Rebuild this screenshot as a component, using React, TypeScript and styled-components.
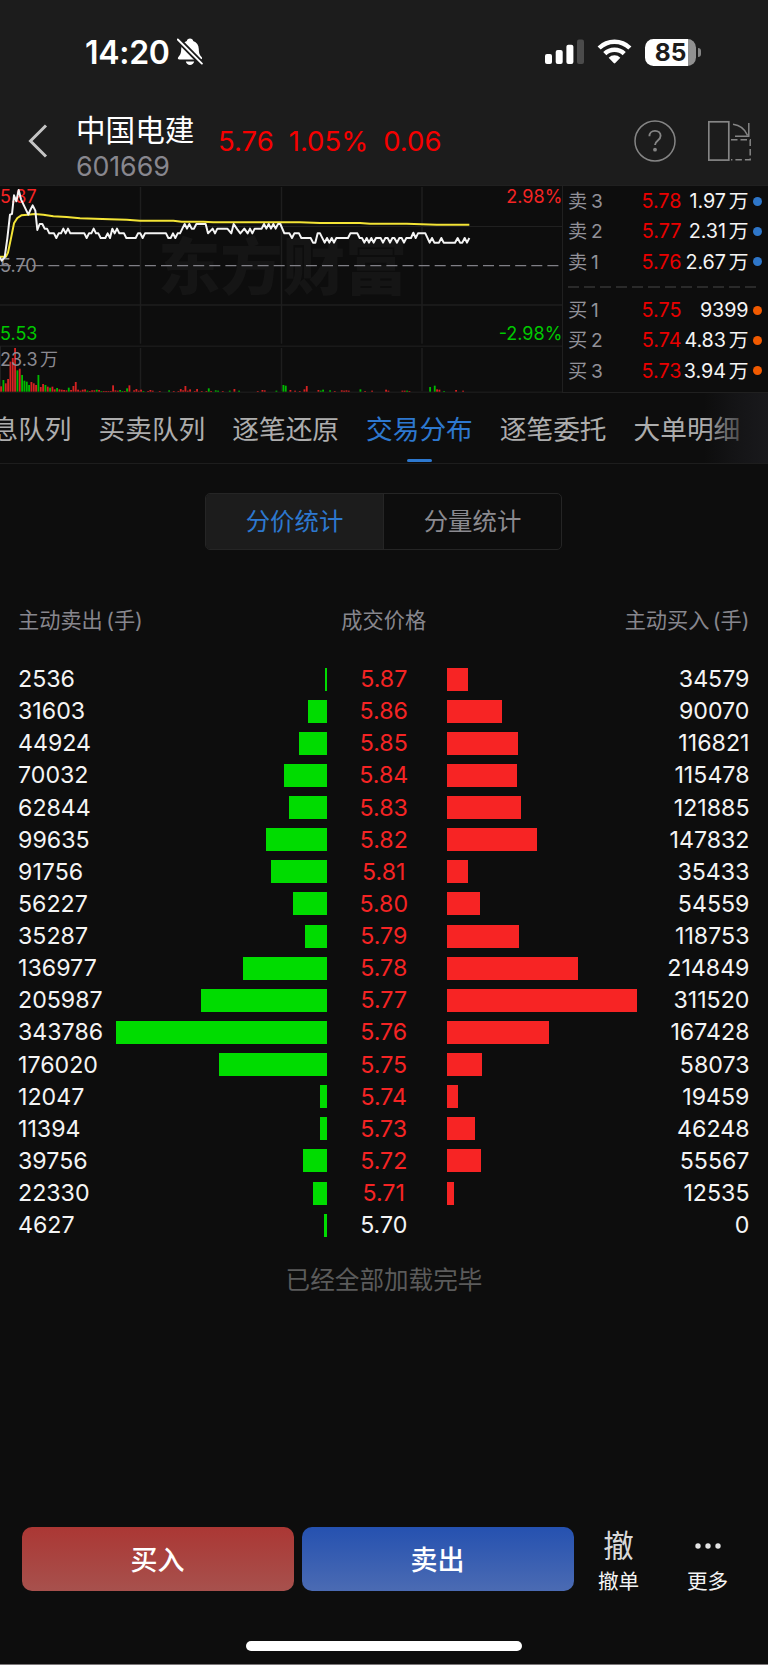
import React from "react";
import styled, { createGlobalStyle, css } from "styled-components";

const GlobalStyle = createGlobalStyle`
  * { box-sizing: border-box; }
  body {
    margin: 0;
    background: #0d0d0d;
    color: #f4f4f4;
    font-family: Inter, "Noto Sans CJK SC", sans-serif;
  }
`;

const Screen = styled.div`
  width: 768px;
  height: 1665px;
  display: flex;
  flex-direction: column;
  overflow: hidden;
  background: #0d0d0d;
  border-bottom: 1px solid #7b7779;
`;

/* ---------- status bar ---------- */

const StatusBar = styled.div`
  height: 104px;
  flex: none;
  display: flex;
  align-items: center;
  padding: 0 67px 0 85px;
  background: #1c1c1c;
`;

const Clock = styled.div`
  font-size: 32px;
  font-weight: 600;
  line-height: 40px;
  letter-spacing: -0.3px;
  color: #fff;
  width: 92px;
  padding-top: 1px;
  white-space: nowrap;
`;

const StatusIcons = styled.div`
  margin-left: auto;
  display: flex;
  align-items: center;
`;

const Battery = styled.div`
  width: 51px;
  height: 27px;
  margin-left: 13px;
  border-radius: 8.5px;
  background: linear-gradient(90deg, #fff 43px, #919191 43px);
  color: #1c1c1c;
  font-size: 24.5px;
  font-weight: 700;
  line-height: 27px;
  text-align: center;
`;

const BatteryTip = styled.div`
  width: 3px;
  height: 9px;
  margin-left: 2px;
  border-radius: 0 4px 4px 0;
  background: #858585;
`;

/* ---------- stock header ---------- */

const Header = styled.header`
  height: 81px;
  flex: none;
  display: flex;
  padding: 7px 17px 0 28px;
  background: #1c1c1c;
`;

const BackIcon = styled.svg`
  margin-top: 13px;
  flex: none;
`;

const StockTitle = styled.div`
  width: 142px;
  margin-left: 28px;
`;

const StockName = styled.div`
  height: 39px;
  font-size: 29.6px;
  line-height: 38px;
  color: #fff;
  white-space: nowrap;
`;

const StockCode = styled.div`
  height: 34px;
  font-size: 26.8px;
  line-height: 33px;
  letter-spacing: -0.1px;
  color: #88878e;
`;

const Quote = styled.div`
  height: 61px;
  display: flex;
  gap: 15px;
  font-size: 27.5px;
  line-height: 61px;
  color: #f60000;
`;

const HeaderActions = styled.div`
  margin-left: auto;
  display: flex;
  gap: 32px;
  padding-top: 9px;
`;

/* ---------- market strip ---------- */

const Market = styled.section`
  height: 208px;
  flex: none;
  display: flex;
`;

const Book = styled.div`
  flex: 1;
  padding: 1px 7px 0 5px;
  border: solid #202020;
  border-width: 1px 0 1px 1px;
`;

const BookRow = styled.div`
  height: 30.3px;
  display: grid;
  grid-template-columns: 50px 63.5px 67px 9px;
  column-gap: 0;
  align-items: center;
  font-size: 19.8px;
  line-height: 29px;
  white-space: nowrap;
`;

const BookLabel = styled.span`
  font-size: 19.2px;
  word-spacing: -1.5px;
  color: #929198;
  height: 30px;
`;

const BookPrice = styled.span`
  text-align: right;
  color: #e80000;
  height: 30px;
`;

const BookVolume = styled.span`
  text-align: right;
  letter-spacing: -0.1px;
  word-spacing: -2.5px;
  height: 30px;
`;

const Dot = styled.span<{ $side: "sell" | "buy" }>`
  width: 9px;
  height: 9px;
  margin: 0 0 2px 4px;
  border-radius: 50%;
  background: ${(p) => (p.$side === "sell" ? "#2e76c9" : "#f15a00")};
`;

const BookDivider = styled.div`
  height: 2px;
  margin: 8px 5px 8px 0;
  background: repeating-linear-gradient(90deg, #2a2a2a 0 11px, transparent 11px 16.1px);
`;

/* ---------- tabs ---------- */

const Tabs = styled.nav`
  position: relative;
  height: 71px;
  flex: none;
  display: flex;
  gap: 27px;
  padding-left: 98.5px;
  border-bottom: 1px solid #1d1d1d;
  overflow: hidden;

  &::after {
    content: "";
    position: absolute;
    top: 0;
    right: 0;
    width: 64px;
    height: 70px;
    background: linear-gradient(90deg, rgba(24, 24, 27, 0), rgba(25, 25, 28, 0.6) 50%, #19191c);
  }
`;

const Tab = styled.div<{ $active?: boolean; $clipped?: boolean }>`
  flex: none;
  display: flex;
  flex-direction: column;
  align-items: center;
  justify-content: space-between;
  height: 69px;
  font-size: 26.7px;
  line-height: 73px;
  color: ${(p) => (p.$active ? "#2d78cf" : "#adadad")};
  ${(p) => p.$clipped && css`margin-left: -107px;`}

  span { height: 66px; }
`;

const Underline = styled.i`
  width: 25px;
  height: 3px;
  border-radius: 2px;
  background: #2d78cf;
`;

/* ---------- distribution ---------- */

const Segments = styled.div`
  width: 357px;
  height: 57px;
  flex: none;
  margin: 29px auto 0 205px;
  display: flex;
  border: 1px solid #252525;
  border-radius: 5px;
  overflow: hidden;
`;

const Segment = styled.div<{ $active?: boolean }>`
  flex: 1;
  height: 55px;
  line-height: 55px;
  text-align: center;
  font-size: 24.4px;
  color: ${(p) => (p.$active ? "#2d78cf" : "#8b8a90")};
  background: ${(p) => (p.$active ? "#1c1c1c" : "transparent")};
  & + & { border-left: 1px solid #252525; }
`;

const Columns = styled.div`
  display: grid;
  grid-template-columns: 1fr 1fr 1fr;
  height: 32px;
  flex: none;
  margin: 54px 18.5px 0 18px;
  font-size: 21.2px;
  line-height: 32px;
  color: #87868d;
  word-spacing: -2.5px;

  span:nth-child(2) { text-align: center; }
  span:nth-child(3) { text-align: right; }
`;

const Rows = styled.div`
  padding: 0 18.5px 0 18px;
  margin-top: 27px;
  flex: none;
`;

const Row = styled.div`
  height: 32.14px;
  display: grid;
  grid-template-columns: 92px 217px 119.5px 191px 1fr;
  align-items: center;
  font-size: 23.2px;
  line-height: 32px;
`;

const SellCount = styled.span`
  white-space: nowrap;
`;

const BuyCount = styled.span`
  text-align: right;
`;

const Price = styled.span<{ $flat: boolean }>`
  text-align: center;
  padding-right: 6px;
  color: ${(p) => (p.$flat ? "#f4f4f4" : "#f52424")};
`;

const Bar = styled.i<{ $side: "sell" | "buy" }>`
  height: 23px;
  justify-self: ${(p) => (p.$side === "sell" ? "end" : "start")};
  background: ${(p) => (p.$side === "sell" ? "#00dc00" : "#f72424")};
`;

const EndNote = styled.div`
  margin-top: 21px;
  height: 36px;
  line-height: 36px;
  text-align: center;
  font-size: 24.6px;
  color: #5b5b5b;
`;

/* ---------- bottom bar ---------- */

const Footer = styled.footer`
  margin-top: auto;
  height: 137px;
  flex: none;
  display: flex;
  padding-left: 21.5px;
`;

const TradeButton = styled.div<{ $side: "sell" | "buy" }>`
  width: 272px;
  height: 64px;
  margin-right: 8px;
  border-radius: 10px;
  font-size: 27px;
  font-weight: 500;
  line-height: 67px;
  text-align: center;
  color: #fff;
  background: ${(p) =>
    p.$side === "buy"
      ? "linear-gradient(#ab3734, #a7514d)"
      : "linear-gradient(#2551b0, #4b6bb3)"};
`;

const Action = styled.div<{ $w: number }>`
  width: ${(p) => p.$w}px;
  display: flex;
  flex-direction: column;
  align-items: center;
`;

const ActionGlyph = styled.div`
  height: 37px;
  display: flex;
  align-items: center;
  font-size: 30.5px;
  line-height: 37px;
  color: #d8d8d8;
`;

const ActionLabel = styled.div`
  height: 36px;
  font-size: 20.6px;
  line-height: 36px;
`;

const HomeArea = styled.div`
  position: absolute;
  top: 1641px;
  left: 246px;
  width: 276px;
  height: 10px;
  border-radius: 5px;
  background: #fff;
`;

/* ---------- data ---------- */

const SCALE = 210.6 / 343786;

const distribution: [number, string, number][] = [
  [2536, "5.87", 34579],
  [31603, "5.86", 90070],
  [44924, "5.85", 116821],
  [70032, "5.84", 115478],
  [62844, "5.83", 121885],
  [99635, "5.82", 147832],
  [91756, "5.81", 35433],
  [56227, "5.80", 54559],
  [35287, "5.79", 118753],
  [136977, "5.78", 214849],
  [205987, "5.77", 311520],
  [343786, "5.76", 167428],
  [176020, "5.75", 58073],
  [12047, "5.74", 19459],
  [11394, "5.73", 46248],
  [39756, "5.72", 55567],
  [22330, "5.71", 12535],
  [4627, "5.70", 0],
];

const sells = [
  ["卖 3", "5.78", "1.97 万"],
  ["卖 2", "5.77", "2.31 万"],
  ["卖 1", "5.76", "2.67 万"],
];

const buys = [
  ["买 1", "5.75", "9399"],
  ["买 2", "5.74", "4.83 万"],
  ["买 3", "5.73", "3.94 万"],
];

/* Chart geometry is kept at 3x the drawn size. */
const priceLine =
  "0,232 5,242 14,232 22,175 30,104 36,102 42,46 49,64 56,30 63,58 85,104 91,90 98,76 106,92 112,150 119,132 127,132 134,146 141,146 148,160 162,160 169,174 176,160 183,160 190,146 197,160 204,146 211,160 253,160 260,174 267,160 274,160 281,146 288,160 295,160 302,174 316,174 323,160 330,174 337,146 344,160 351,146 358,160 372,160 379,174 407,174 414,160 421,160 428,174 435,160 498,160 505,174 512,174 519,160 526,174 533,160 540,160 547,146 554,132 561,146 568,132 575,146 582,146 589,132 617,132 624,160 638,146 645,160 652,146 682,146 694,160 701,132 712,148 721,160 733,146 743,160 750,146 757,160 764,146 785,146 792,132 799,146 806,132 813,146 820,132 827,146 834,132 841,132 853,160 868,160 876,174 883,160 897,160 904,174 932,174 939,188 946,188 953,160 960,160 974,188 981,174 988,188 995,174 1002,188 1009,174 1044,174 1051,160 1072,160 1079,174 1086,174 1093,188 1100,174 1107,188 1114,174 1121,188 1128,174 1142,174 1149,188 1156,174 1163,174 1170,188 1177,174 1183,174 1191,188 1198,174 1205,174 1212,188 1219,174 1233,174 1240,158 1247,174 1254,160 1276,160 1289,188 1296,174 1303,188 1317,188 1324,174 1331,188 1365,188 1373,174 1380,188 1387,188 1394,174 1401,188 1408,174";

const averageLine =
  "0,230 18,230 24,218 34,170 42,130 52,114 64,106 84,104 104,102 130,104 160,109 200,111 240,115 330,118 380,119 420,122 520,122 545,125 610,125 640,127 900,127 960,129 1080,129 1110,131 1220,131 1310,134 1408,134";

const volumes: [number, number, "r" | "g"][] = [
  [3, 16, "r"], [10, 35, "g"], [17, 25, "r"], [24, 38, "r"], [31, 90, "r"], [38, 101, "r"], [45, 131, "r"],
  [52, 64, "g"], [59, 69, "r"], [66, 50, "g"], [73, 33, "g"], [80, 30, "g"], [87, 20, "g"], [94, 29, "r"],
  [101, 25, "r"], [108, 20, "r"], [115, 50, "g"], [122, 14, "r"], [129, 23, "r"], [136, 20, "g"], [143, 15, "r"],
  [150, 12, "g"], [157, 15, "r"], [164, 7, "r"], [171, 11, "g"], [178, 7, "r"], [185, 6, "r"], [192, 5, "r"],
  [199, 4, "r"], [206, 12, "g"], [213, 5, "r"], [220, 17, "r"], [227, 29, "r"], [234, 6, "r"], [241, 3, "r"],
  [248, 6, "r"], [255, 7, "r"], [262, 3, "g"], [269, 2, "r"], [276, 4, "r"], [283, 4, "r"], [290, 6, "g"],
  [297, 5, "r"], [304, 2, "g"], [311, 2, "r"], [318, 2, "r"], [325, 2, "r"], [332, 2, "r"], [339, 19, "r"],
  [346, 4, "r"], [353, 3, "r"], [360, 5, "g"], [367, 2, "g"], [374, 2, "r"], [381, 10, "g"], [388, 19, "r"],
  [402, 4, "r"], [409, 8, "r"], [416, 3, "r"], [423, 6, "r"], [430, 2, "g"], [444, 2, "r"], [451, 5, "r"],
  [458, 3, "r"], [479, 2, "r"], [507, 4, "g"], [521, 2, "r"], [535, 2, "r"], [542, 8, "r"], [549, 4, "r"],
  [556, 17, "r"], [563, 3, "r"], [570, 7, "r"], [584, 2, "r"], [591, 8, "r"], [605, 2, "r"], [619, 2, "r"],
  [626, 10, "g"], [633, 2, "r"], [647, 4, "g"], [654, 3, "g"], [668, 2, "r"], [689, 3, "g"], [703, 8, "r"],
  [717, 3, "g"], [773, 2, "r"], [787, 5, "r"], [794, 4, "r"], [829, 3, "g"], [850, 20, "g"], [857, 18, "g"],
  [871, 5, "r"], [885, 3, "r"], [899, 2, "r"], [913, 7, "r"], [920, 17, "r"], [955, 5, "r"], [962, 3, "g"],
  [969, 6, "g"], [990, 4, "g"], [1004, 2, "r"], [1025, 4, "r"], [1032, 3, "r"], [1039, 4, "r"], [1046, 3, "r"],
  [1081, 7, "g"], [1095, 2, "r"], [1116, 3, "r"], [1158, 6, "r"], [1165, 3, "r"], [1207, 3, "r"], [1214, 3, "r"],
  [1221, 3, "g"], [1228, 2, "r"], [1290, 14, "g"], [1304, 18, "g"], [1311, 7, "r"], [1318, 6, "r"],
  [1332, 2, "g"], [1368, 5, "r"], [1389, 3, "r"],
];

function IntradayChart() {
  return (
    <svg width="562" height="208" viewBox="0 15 1686 624" fontFamily='Inter, "Noto Sans CJK SC", sans-serif' fontSize="54">
      <g stroke="#202020" strokeWidth="3" fill="none">
        <path d="M0 16.5H1686M0 139.5H1686M0 498.5H1686M0 636.5H1686M1.5 498V636" />
        <path d="M0 375H1686M421.5 21V491M844.5 21V491M1266 21V491M421.5 504V634M844.5 504V634M1266 504V634" strokeWidth="4.5" stroke="#1e1e1e" />
      </g>
      <text x="474" y="329" fontSize="187" fontWeight="900" fill="#151515" fontFamily='"Noto Sans CJK SC", sans-serif'>
        东方财富
      </text>
      <path d="M0 257H1686" stroke="#807f86" strokeWidth="4" strokeDasharray="33 15.3" />
      {volumes.map(([x, h, c]) => (
        <rect key={x} x={x - 2.5} y={635 - h} width="5.5" height={h} fill={c === "r" ? "#d42222" : "#00b800"} />
      ))}
      <text x="0" y="70" fill="#f52424">5.87</text>
      <text x="1687" y="70" textAnchor="end" fill="#f52424">2.98%</text>
      <text x="0" y="275" fill="#8b8a91">5.70</text>
      <text x="0" y="481" fill="#00c800">5.53</text>
      <text x="1687" y="481" textAnchor="end" fill="#00c800">-2.98%</text>
      <text x="0" y="558" fill="#8b8a91" wordSpacing="-8">23.3 万</text>
      <polyline points={averageLine} fill="none" stroke="#f3e436" strokeWidth="6" strokeLinejoin="round" />
      <polyline points={priceLine} fill="none" stroke="#f4f4f4" strokeWidth="6" strokeLinejoin="round" />
    </svg>
  );
}

function MutedBell() {
  return (
    <svg width="26" height="28" viewBox="0 0 26 28">
      <path d="M13 0.6c1.8 0 3 1.2 3.2 2.5 3.6 1.3 5.5 4.2 5.6 8 .1 4 .6 5.600 3 8.200.6 1 .1 2.100-1.100 2.100H2.300C.9 21.400.5 20.200 1.200 19.200 3.700 16.600 4.100 15 4.200 11.100 4.300 7.300 6.200 4.400 9.800 3.100 10 1.800 11.200.6 13 .6Z" fill="#fff" />
      <path d="M8.800 23.500h8.400c-.6 2.300-2.200 3.500-4.200 3.500s-3.600-1.200-4.200-3.500Z" fill="#fff" />
      <path d="M0 0.500L25.500 26.500" stroke="#1c1c1c" strokeWidth="5.500" />
      <path d="M0.800 1.500L24.900 25.600" stroke="#fff" strokeWidth="1.900" strokeLinecap="round" />
    </svg>
  );
}

function Signal() {
  return (
    <svg width="39" height="26" viewBox="0 0 39 26">
      <rect x="0" y="15" width="7" height="10" rx="2" fill="#fff" />
      <rect x="10.700" y="11" width="7" height="14" rx="2" fill="#fff" />
      <rect x="21.400" y="5.700" width="7" height="19.300" rx="2" fill="#fff" />
      <rect x="32" y="0.500" width="7" height="24.500" rx="2" fill="#4b4b4b" />
    </svg>
  );
}

const WifiIcon = styled.svg`
  margin-left: 13px;
`;

function Wifi() {
  return (
    <WifiIcon width="35" height="26" viewBox="0 0 36 26">
      <g fill="none" stroke="#fff" strokeWidth="4.600">
        <path d="M2.200 8.900a22.600 22.600 0 0 1 31.600 0" />
        <path d="M8 14.700a14.400 14.400 0 0 1 20 0" />
      </g>
      <path d="M12 18.800a8.700 8.700 0 0 1 12 0l-5.200 5.500a1.100 1.100 0 0 1-1.600 0Z" fill="#fff" />
    </WifiIcon>
  );
}

export default function App() {
  return (
    <Screen>
      <GlobalStyle />
      <StatusBar>
        <Clock>14:20</Clock>
        <MutedBell />
        <StatusIcons>
          <Signal />
          <Wifi />
          <Battery>85</Battery>
          <BatteryTip />
        </StatusIcons>
      </StatusBar>

      <Header>
        <BackIcon width="20" height="34" viewBox="0 0 20 34">
          <path d="M18 1.500L2.500 17L18 32.500" fill="none" stroke="#c4c4c4" strokeWidth="3" />
        </BackIcon>
        <StockTitle>
          <StockName>中国电建</StockName>
          <StockCode>601669</StockCode>
        </StockTitle>
        <Quote>
          <span>5.76</span>
          <span>1.05%</span>
          <span>0.06</span>
        </Quote>
        <HeaderActions>
          <svg width="42" height="42" viewBox="0 0 42 42" fill="none" stroke="#858585">
            <circle cx="21" cy="21" r="20" strokeWidth="1.500" />
            <path d="M15.400 16.200c0-3.200 2.300-5.300 5.600-5.300s5.600 2 5.600 4.900c0 4.800-5.600 4.400-5.600 9.300" strokeWidth="1.900" />
            <circle cx="21" cy="29.700" r="1.900" fill="#858585" stroke="none" />
          </svg>
          <svg width="43" height="42" viewBox="0 0 43 42" fill="none" stroke="#858585" strokeWidth="1.500">
            <rect x="0.800" y="1.800" width="20" height="38.300" strokeWidth="1.700" />
            <path d="M25 4.300c7.500 1 11.800 4.500 14.500 11M40.800 3V16.200M27 16.200h14.500" />
            <path d="M23 19.800h19.200v20H23" strokeDasharray="6.500 3" />
          </svg>
        </HeaderActions>
      </Header>

      <Market>
        <IntradayChart />
        <Book>
          {sells.map(([l, p, v]) => (
            <BookRow key={l}>
              <BookLabel>{l}</BookLabel>
              <BookPrice>{p}</BookPrice>
              <BookVolume>{v}</BookVolume>
              <Dot $side="sell" />
            </BookRow>
          ))}
          <BookDivider />
          {buys.map(([l, p, v]) => (
            <BookRow key={l}>
              <BookLabel>{l}</BookLabel>
              <BookPrice>{p}</BookPrice>
              <BookVolume>{v}</BookVolume>
              <Dot $side="buy" />
            </BookRow>
          ))}
        </Book>
      </Market>

      <Tabs>
        <Tab $clipped><span>息队列</span></Tab>
        <Tab><span>买卖队列</span></Tab>
        <Tab><span>逐笔还原</span></Tab>
        <Tab $active><span>交易分布</span><Underline /></Tab>
        <Tab><span>逐笔委托</span></Tab>
        <Tab><span>大单明细</span></Tab>
      </Tabs>

      <Segments>
        <Segment $active>分价统计</Segment>
        <Segment>分量统计</Segment>
      </Segments>

      <Columns>
        <span>主动卖出 (手)</span>
        <span>成交价格</span>
        <span>主动买入 (手)</span>
      </Columns>

      <Rows>
        {distribution.map(([sell, price, buy]) => (
          <Row key={price}>
            <SellCount>{sell}</SellCount>
            <Bar $side="sell" style={{ width: Math.max(sell * SCALE, 2) }} />
            <Price $flat={price === "5.70"}>{price}</Price>
            <Bar $side="buy" style={{ width: buy * SCALE }} />
            <BuyCount>{buy}</BuyCount>
          </Row>
        ))}
      </Rows>

      <EndNote>已经全部加载完毕</EndNote>

      <Footer>
        <TradeButton $side="buy">买入</TradeButton>
        <TradeButton $side="sell">卖出</TradeButton>
        <Action $w={74}>
          <ActionGlyph>撤</ActionGlyph>
          <ActionLabel>撤单</ActionLabel>
        </Action>
        <Action $w={104}>
          <ActionGlyph>
            <svg width="28" height="8" viewBox="0 0 28 8" fill="#e4e4e4">
              <circle cx="4" cy="4" r="2.700" />
              <circle cx="14" cy="4" r="2.700" />
              <circle cx="24" cy="4" r="2.700" />
            </svg>
          </ActionGlyph>
          <ActionLabel>更多</ActionLabel>
        </Action>
      </Footer>
      <HomeArea />
    </Screen>
  );
}
